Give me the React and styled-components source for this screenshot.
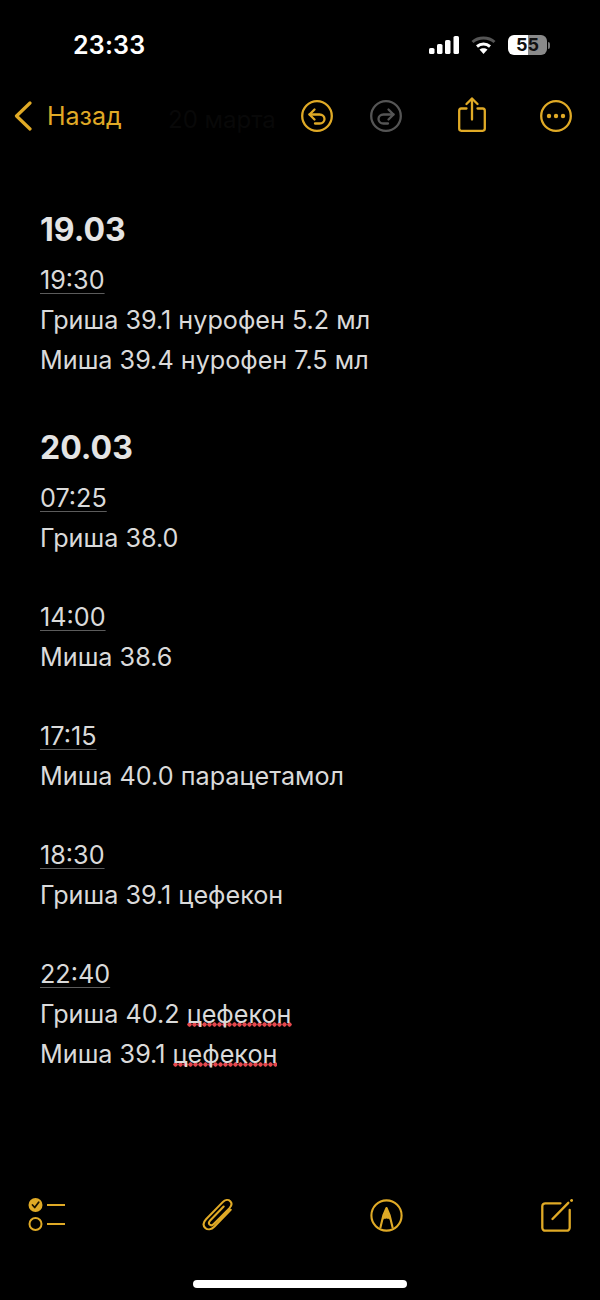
import React from 'react';
import styled, { createGlobalStyle } from 'styled-components';

const GOLD = '#e0aa26';

const GlobalStyle = createGlobalStyle`
  html, body {
    margin: 0;
    padding: 0;
    background: #000;
  }
  body {
    font-family: Inter, "Liberation Sans", sans-serif;
  }
`;

const Screen = styled.div`
  width: 600px;
  height: 1300px;
  background: #000;
  display: flex;
  flex-direction: column;
  overflow: hidden;
`;

const StatusBar = styled.div`
  height: 50px;
  padding: 20px 50px 0 73px;
  display: flex;
  justify-content: space-between;
  align-items: center;
`;

const Clock = styled.div`
  color: #fff;
  font-size: 25px;
  font-weight: 600;
  letter-spacing: 0.2px;
`;

const StatusIcons = styled.div`
  display: flex;
  align-items: center;
  gap: 12px;
`;

const Battery = styled.div`
  width: 39px;
  height: 20px;
  border-radius: 6px;
  overflow: hidden;
  background: linear-gradient(90deg, #fff 0 51%, #8a8a8a 51% 100%);
  color: #111;
  font-size: 18px;
  font-weight: 700;
  line-height: 20px;
  text-align: center;
`;

const BatteryTip = styled.div`
  width: 2px;
  height: 7px;
  margin-left: -11px;
  background: #777;
  border-radius: 0 2px 2px 0;
`;

const Nav = styled.div`
  position: relative;
  height: 62px;
  margin-top: 13px;
  padding: 2px 0 0 14px;
  display: flex;
  align-items: center;
`;

const Back = styled.div`
  display: flex;
  align-items: center;
  gap: 14px;
  width: 287px;
  color: ${GOLD};
  font-size: 25px;
`;

const GhostTitle = styled.div`
  position: absolute;
  left: 168px;
  top: 22px;
  color: #080808;
  font-size: 24px;
  white-space: nowrap;
`;

const NavIcon = styled.svg`
  display: block;
  flex: none;
  margin-left: ${props => props.$gap}px;
`;

const ShareIcon = styled(NavIcon)`
  margin-bottom: 3px;
`;

const Note = styled.div`
  flex: 1;
  padding: 57px 0 0 40px;
  color: #dadada;
`;

const DayTitle = styled.div`
  height: 52px;
  color: #e4e4e4;
  font-size: 32px;
  font-weight: 700;
  line-height: 52px;
  margin-top: ${props => (props.$first ? 0 : 42)}px;
  margin-bottom: 4px;
`;

const Line = styled.div`
  height: 40px;
  font-size: 25.2px;
  line-height: 40px;
  white-space: nowrap;
`;

const Spacer = styled.div`
  height: 39px;
`;

const Time = styled.span`
  text-decoration: underline;
  text-decoration-color: #5c5c5c;
  text-decoration-thickness: 1px;
  text-underline-offset: 4px;
`;

const Misspelled = styled.span`
  background-image: radial-gradient(circle, #e5484d 1.9px, transparent 2.400px);
  background-size: 5px 5px;
  background-repeat: repeat-x;
  background-position: 0 calc(100% - 2px);
`;

const Toolbar = styled.div`
  height: 68px;
  padding-left: 28px;
  display: flex;
  align-items: center;
`;

const ToolIcon = styled.svg`
  display: block;
  flex: none;
  margin-left: ${props => props.$gap}px;
`;

const HomeRow = styled.div`
  height: 51px;
  display: flex;
  justify-content: center;
  padding-top: 31px;
  box-sizing: border-box;
`;

const HomeBar = styled.div`
  width: 214px;
  height: 8px;
  background: #fff;
  border-radius: 4px;
`;

const DAYS = [
  {
    title: '19.03',
    entries: [
      { time: '19:30', lines: [['Гриша 39.1 нурофен 5.2 мл'], ['Миша 39.4 нурофен 7.5 мл']] },
    ],
  },
  {
    title: '20.03',
    entries: [
      { time: '07:25', lines: [['Гриша 38.0']] },
      { time: '14:00', lines: [['Миша 38.6']] },
      { time: '17:15', lines: [['Миша 40.0 парацетамол']] },
      { time: '18:30', lines: [['Гриша 39.1 цефекон']] },
      { time: '22:40', lines: [['Гриша 40.2 ', 'цефекон'], ['Миша 39.1 ', 'цефекон']] },
    ],
  },
];

const Signal = () => (
  <svg width="30" height="18" viewBox="0 0 30 18" fill="#fff">
    <rect x="0" y="12" width="5.500" height="6" rx="1.600" />
    <rect x="8" y="8" width="5.500" height="10" rx="1.600" />
    <rect x="16" y="4" width="5.500" height="14" rx="1.600" />
    <rect x="24.500" y="0" width="5.500" height="18" rx="1.600" />
  </svg>
);

const Wifi = () => (
  <svg width="25" height="18" viewBox="0 0 25 18" fill="none" strokeWidth="3">
    <path d="M1.500 6C7.500.6 17.500.6 23.500 6" stroke="#555" />
    <path d="M6 10.500C9.800 7.300 15.200 7.300 19 10.500" stroke="#fff" />
    <path d="M12.500 18l-4-4.400c2.300-1.900 5.700-1.900 8 0z" fill="#fff" />
  </svg>
);

const Undo = ({ color, flip, gap }) => (
  <NavIcon $gap={gap} width="32" height="32" viewBox="0 0 32 32" fill="none" stroke={color} strokeWidth="2.300" strokeLinecap="round" strokeLinejoin="round">
    <circle cx="16" cy="16" r="14.800" />
    <g transform={flip ? 'translate(32 0) scale(-1 1)' : undefined}>
      <path d="M13.500 9.500L8.500 14.500 13.500 19.500" />
      <path d="M8.500 14.500H18.500C21.500 14.500 23.500 16.500 23.500 19S21.500 23.500 18.500 23.500H14" />
    </g>
  </NavIcon>
);

const Share = ({ gap }) => (
  <ShareIcon $gap={gap} width="28" height="35" viewBox="0 0 28 35" fill="none" stroke={GOLD} strokeWidth="2.300" strokeLinecap="round" strokeLinejoin="round">
    <path d="M8.500 11.500H3.300A2.200 2.200 0 0 0 1.200 13.700V31.600A2.200 2.200 0 0 0 3.300 33.800H24.700A2.200 2.200 0 0 0 26.800 31.600V13.700A2.200 2.200 0 0 0 24.700 11.500H19.500" />
    <path d="M14 22.500V2" />
    <path d="M8.500 7L14 1.500 19.500 7" />
  </ShareIcon>
);

const More = ({ gap }) => (
  <NavIcon $gap={gap} width="32" height="32" viewBox="0 0 32 32" fill="none" stroke={GOLD} strokeWidth="2.300">
    <circle cx="16" cy="16" r="14.800" />
    <g fill={GOLD} stroke="none">
      <circle cx="9" cy="16" r="2.200" />
      <circle cx="16" cy="16" r="2.200" />
      <circle cx="23" cy="16" r="2.200" />
    </g>
  </NavIcon>
);

const Checklist = () => (
  <ToolIcon $gap="0" width="38" height="36" viewBox="0 0 38 36" fill="none">
    <circle cx="7.500" cy="8" r="7" fill={GOLD} />
    <path d="M4.500 8l2.200 2.500 4-5.200" stroke="#1a1200" strokeWidth="1.800" strokeLinecap="round" strokeLinejoin="round" />
    <circle cx="7.500" cy="27" r="6" stroke={GOLD} strokeWidth="2" />
    <path d="M19 8h18M19 27h18" stroke={GOLD} strokeWidth="2" />
  </ToolIcon>
);

const Clip = () => (
  <ToolIcon $gap="136" width="32" height="34" viewBox="0 0 34 36" fill="none" stroke={GOLD} strokeWidth="2.200" strokeLinecap="round" strokeLinejoin="round">
    <path d="M30.500 12.500L13 30.500c-3 3-7 3.500-9.500 1.200-2.500-2.400-2.200-6 .8-9.200L22 4.300c2.500-2.500 6-3 8-1s1.500 5-1 7.700L12.500 27.500c-1.500 1.500-3.300 1.700-4.400.7-1.100-1.100-.8-2.900.6-4.400L23 9" />
  </ToolIcon>
);

const Markup = () => (
  <ToolIcon $gap="135.500" width="33" height="33" viewBox="0 0 33 33" fill="none" stroke={GOLD} strokeWidth="2.100" strokeLinejoin="round">
    <circle cx="16.500" cy="16.500" r="15.100" />
    <path d="M10.300 29L13.300 16.500 16.500 9 19.700 16.500 22.700 29" />
    <path d="M13 20L16.500 9 20 20C18 18.800 15 18.800 13 20Z" fill={GOLD} strokeWidth="1" />
  </ToolIcon>
);

const Compose = () => (
  <ToolIcon $gap="138.500" width="32" height="33" viewBox="0 0 32 33" fill="none" stroke={GOLD} strokeLinecap="round" strokeLinejoin="round">
    <path d="M19.500 4.300H4.300A3 3 0 0 0 1.300 7.300V28.700A3 3 0 0 0 4.300 31.700H25.700A3 3 0 0 0 28.700 28.700V11" strokeWidth="2.300" />
    <path d="M11.500 20L27.300 3.800" strokeWidth="2.400" />
    <path d="M30.700 1.400L30.500 1.600" strokeWidth="2.800" />
  </ToolIcon>
);

const App = () => (
  <Screen>
    <GlobalStyle />
    <StatusBar>
      <Clock>23:33</Clock>
      <StatusIcons>
        <Signal />
        <Wifi />
        <Battery>55</Battery>
        <BatteryTip />
      </StatusIcons>
    </StatusBar>
    <Nav>
      <GhostTitle>20 марта</GhostTitle>
      <Back>
        <svg width="19" height="30" viewBox="0 0 19 30" fill="none" stroke={GOLD} strokeWidth="3.200" strokeLinecap="round" strokeLinejoin="round">
          <path d="M16 2L2.500 15 16 28" />
        </svg>
        Назад
      </Back>
      <Undo color={GOLD} gap="0" />
      <Undo color="#555" flip gap="37" />
      <Share gap="56" />
      <More gap="54" />
    </Nav>
    <Note>
      {DAYS.map((day, dayIndex) => (
        <React.Fragment key={day.title}>
          <DayTitle $first={dayIndex === 0}>{day.title}</DayTitle>
          {day.entries.map((entry, entryIndex) => (
            <React.Fragment key={entry.time}>
              {entryIndex > 0 && <Spacer />}
              <Line><Time>{entry.time}</Time></Line>
              {entry.lines.map(([text, wrong]) => (
                <Line key={text}>
                  {text}
                  {wrong && <Misspelled>{wrong}</Misspelled>}
                </Line>
              ))}
            </React.Fragment>
          ))}
        </React.Fragment>
      ))}
    </Note>
    <Toolbar>
      <Checklist />
      <Clip />
      <Markup />
      <Compose />
    </Toolbar>
    <HomeRow>
      <HomeBar />
    </HomeRow>
  </Screen>
);

export default App;
